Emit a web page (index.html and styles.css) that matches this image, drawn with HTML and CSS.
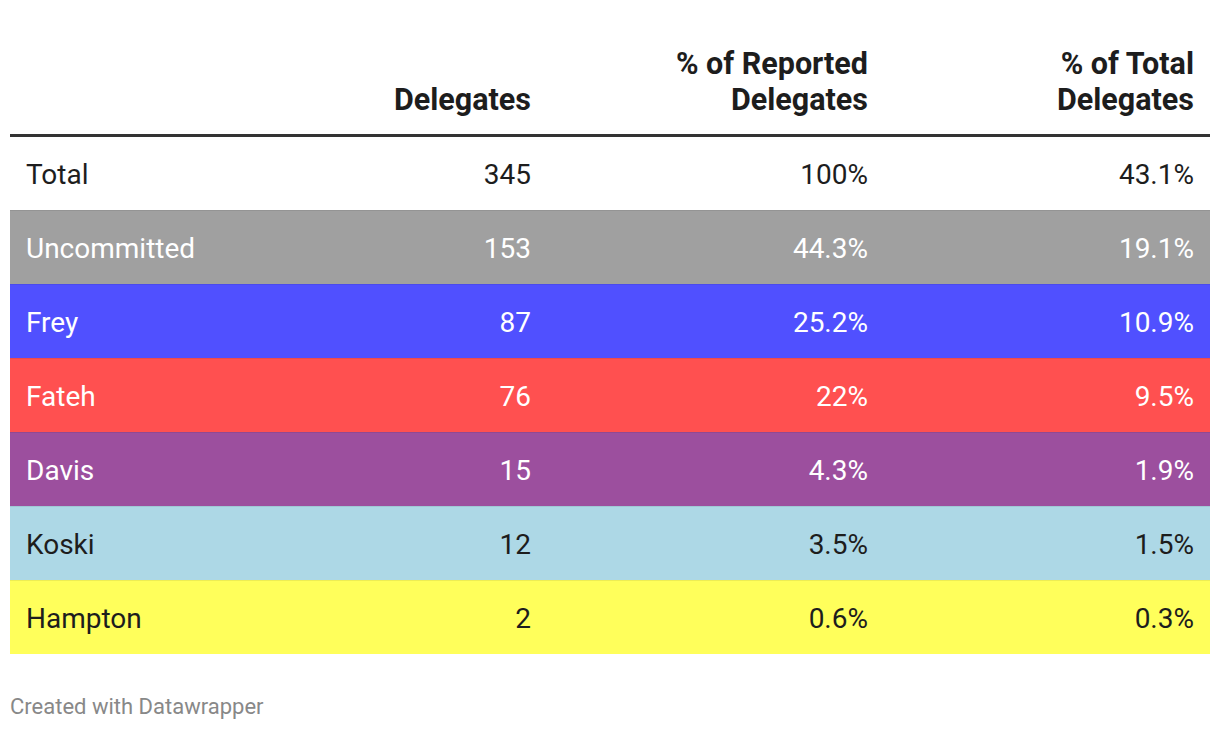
FILE: index.html
```html
<!DOCTYPE html>
<html>
<head>
<meta charset="utf-8">
<link rel="stylesheet" href="styles.css">
</head>
<body>
<div class="chart">
  <div class="table">
    <div class="row head">
      <div class="cell name"></div>
      <div class="cell num">Delegates</div>
      <div class="cell num">% of Reported<br>Delegates</div>
      <div class="cell num">% of Total<br>Delegates</div>
    </div>
    <div class="row total">
      <div class="cell name">Total</div>
      <div class="cell num">345</div>
      <div class="cell num">100%</div>
      <div class="cell num">43.1%</div>
    </div>
    <div class="row gray light-text">
      <div class="cell name">Uncommitted</div>
      <div class="cell num">153</div>
      <div class="cell num">44.3%</div>
      <div class="cell num">19.1%</div>
    </div>
    <div class="row blue light-text">
      <div class="cell name">Frey</div>
      <div class="cell num">87</div>
      <div class="cell num">25.2%</div>
      <div class="cell num">10.9%</div>
    </div>
    <div class="row red light-text">
      <div class="cell name">Fateh</div>
      <div class="cell num">76</div>
      <div class="cell num">22%</div>
      <div class="cell num">9.5%</div>
    </div>
    <div class="row purple light-text">
      <div class="cell name">Davis</div>
      <div class="cell num">15</div>
      <div class="cell num">4.3%</div>
      <div class="cell num">1.9%</div>
    </div>
    <div class="row lightblue">
      <div class="cell name">Koski</div>
      <div class="cell num">12</div>
      <div class="cell num">3.5%</div>
      <div class="cell num">1.5%</div>
    </div>
    <div class="row yellow">
      <div class="cell name">Hampton</div>
      <div class="cell num">2</div>
      <div class="cell num">0.6%</div>
      <div class="cell num">0.3%</div>
    </div>
  </div>
  <div class="footer">Created with Datawrapper</div>
</div>
</body>
</html>
```

FILE: styles.css
```css
html, body {
  margin: 0;
  padding: 0;
  background: #fff;
}
body {
  font-family: Roboto, "Liberation Sans", sans-serif;
  color: #1d1d1d;
}
.chart {
  padding: 0 10px;
}
.table {
  display: flex;
  flex-direction: column;
}
.row {
  display: grid;
  grid-template-columns: 200px 337px 337px 326px;
  align-items: center;
  font-size: 28px;
  height: 74px;
  box-sizing: border-box;
  border-top: 1px solid rgba(0, 0, 0, 0.07);
}
.cell {
  padding: 2px 16px 0 16px;
  white-space: nowrap;
}
.num {
  text-align: right;
}
.row.head {
  height: 137px;
  border-top: none;
  border-bottom: 3px solid #333;
  align-items: end;
  font-weight: 700;
  font-size: 30.5px;
  line-height: 36px;
  padding-bottom: 16px;
}
.row.total {
  height: 73px;
  border-top: none;
}
.light-text { color: #fff; }
.gray { background: #a0a0a0; }
.blue { background: #5050ff; }
.red { background: #ff5050; }
.purple { background: #9c4f9e; }
.lightblue { background: #add8e6; }
.yellow { background: #ffff5b; }
.footer {
  margin-top: 40px;
  font-size: 22px;
  color: #888;
}
```
